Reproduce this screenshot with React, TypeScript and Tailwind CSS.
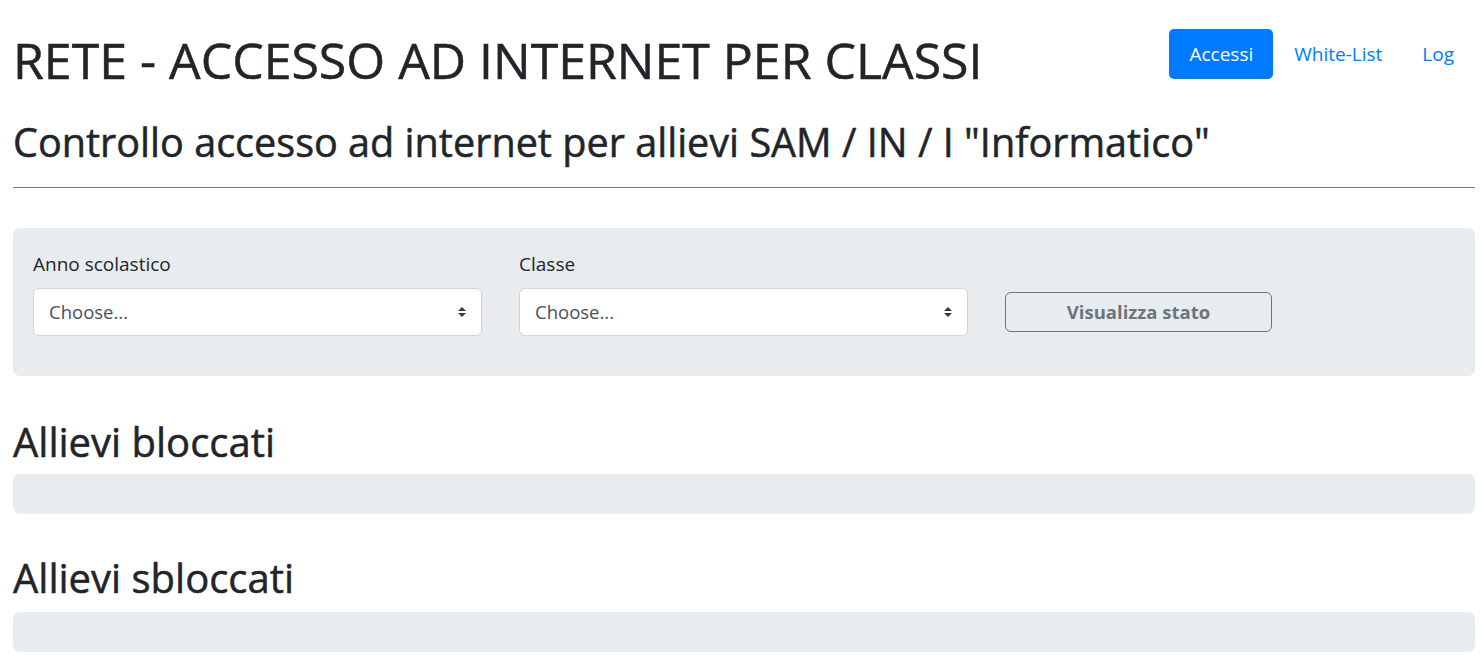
import React from 'react';

function SelectBox({ id }: { id: string }) {
  return (
    <div className="relative">
      <select
        id={id}
        className="block h-[48px] w-full appearance-none rounded-[6px] border border-[#ced4da] bg-white pl-[15px] pr-[36px] text-[18.5px] text-[#495057] outline-none"
        defaultValue=""
      >
        <option value="">Choose...</option>
      </select>
      <svg
        className="pointer-events-none absolute right-[16px] top-1/2 -translate-y-1/2"
        width="8"
        height="10"
        viewBox="0 0 4 5"
      >
        <path d="M2 0L0 2h4zm0 5L0 3h4z" fill="#343a40" />
      </svg>
    </div>
  );
}

export default function App() {
  return (
    <div className="min-h-screen bg-white pl-[13px] pr-[7px] font-['Open_Sans','Segoe_UI',sans-serif] text-[#212529]">
      {/* header */}
      <div className="flex items-start justify-between pt-[29px]">
        <h1 className="mt-[1px] text-[50px] font-normal leading-[1.2] [-webkit-text-stroke:0.5px_#212529]">
          RETE - ACCESSO AD INTERNET PER CLASSI
        </h1>
        <nav className="mr-[1px] flex text-[19px] leading-[30px]">
          <a className="mr-[1px] rounded-[5px] bg-[#007bff] px-[20px] py-[10px] text-white">Accessi</a>
          <a className="px-[20px] py-[10px] text-[#007bff]">White-List</a>
          <a className="px-[20px] py-[10px] text-[#007bff]">Log</a>
        </nav>
      </div>

      <h2 className="mt-[29px] text-[39.6px] font-normal leading-[1.2] [-webkit-text-stroke:0.5px_#212529]">
        Controllo accesso ad internet per allievi SAM / IN / I "Informatico"
      </h2>
      <hr className="mt-[20px] border-t border-[#777777]" />

      {/* filter panel */}
      <div className="mt-[40px] rounded-[7px] bg-[#e9ecef] px-[20px] pb-[40px] pt-[22px]">
        <div className="grid grid-cols-[449px_449px_267px] gap-x-[37px]">
          <div>
            <label htmlFor="anno" className="mb-[10px] block text-[19px] leading-[28px]">Anno scolastico</label>
            <SelectBox id="anno" />
          </div>
          <div>
            <label htmlFor="classe" className="mb-[10px] block text-[19px] leading-[28px]">Classe</label>
            <SelectBox id="classe" />
          </div>
          <div className="mb-[4px] self-end">
            <button className="h-[40px] w-full rounded-[6px] border border-[#6c757d] text-[18.5px] font-bold text-[#6c757d]">
              Visualizza stato
            </button>
          </div>
        </div>
      </div>

      <h3 className="mt-[42px] text-[40px] font-normal leading-[1.2] [-webkit-text-stroke:0.5px_#212529]">Allievi bloccati</h3>
      <div className="mt-[8px] h-[40px] rounded-[7px] bg-[#e9ecef]" />

      <h3 className="mt-[40px] text-[40px] font-normal leading-[1.2] [-webkit-text-stroke:0.5px_#212529]">Allievi sbloccati</h3>
      <div className="mt-[10px] h-[40px] rounded-[7px] bg-[#e9ecef]" />
    </div>
  );
}
